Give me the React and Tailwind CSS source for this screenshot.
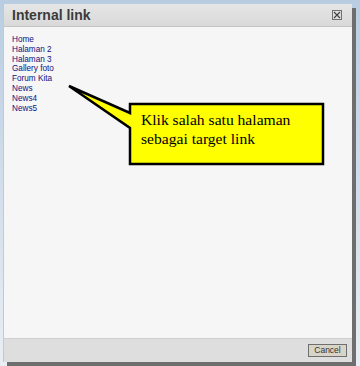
import React from "react";

const pages = ["Home", "Halaman 2", "Halaman 3", "Gallery foto", "Forum Kita", "News", "News4", "News5"];

const Callout = () => (
  <div className="absolute left-0 top-0 w-[360px] h-[366px] pointer-events-none">
    <svg className="absolute left-0 top-0" width="360" height="366" viewBox="0 0 360 366">
      <polygon
        points="69,86 130,113 130,104 323,104 323,164 130,164 130,128"
        fill="#ffff00"
        stroke="#000"
        strokeWidth="2.5"
        strokeLinejoin="miter"
      />
    </svg>
    <div
      className="absolute left-[141px] top-[110px] text-[15.6px] leading-[19px] text-black"
      style={{ fontFamily: '"Liberation Serif", "Times New Roman", serif' }}
    >
      <div>Klik salah satu halaman</div>
      <div>sebagai target link</div>
    </div>
  </div>
);

const App = () => {
  return (
    <div
      className="relative w-[360px] h-[366px] overflow-hidden bg-gradient-to-b from-[#b9cde2] to-[#e9eef4]"
      style={{ fontFamily: '"Liberation Sans", Arial, sans-serif' }}
    >
      {/* Dialog */}
      <div className="ml-[3px] pt-[4px]">
        <div className="w-[349px] h-[358px] flex flex-col bg-[#f6f6f6] border-l border-[#c8c8c8] shadow-[4px_4px_0_#6e6e6e]">
          {/* Title bar */}
          <div className="h-[23px] flex items-center justify-between pl-[8px] pr-[9px] bg-gradient-to-b from-[#e6e6e6] to-[#d9d9d9] border-b border-[#c4c4c4]">
            <span className="text-[14px] font-bold text-[#3b3b3b]">Internal link</span>
            <span className="w-[10px] h-[10px] border border-[#707070] flex items-center justify-center mr-[1px]">
              <svg width="8" height="8" viewBox="0 0 8 8">
                <path d="M1 1L7 7M7 1L1 7" stroke="#444" strokeWidth="1.2" />
              </svg>
            </span>
          </div>

          {/* Body */}
          <div className="flex-1 pl-[8px] pt-[8px]">
            <ul className="flex flex-col">
              {pages.map((p) => (
                <li key={p} className="text-[8.2px] leading-[9.8px] text-[#10107e]">
                  {p}
                </li>
              ))}
            </ul>
          </div>

          {/* Footer */}
          <div className="h-[24px] flex items-center justify-end pr-[5px] bg-[#dedede] border-t border-[#cfcfcf]">
            <button className="w-[39px] h-[13px] border border-[#6f6f6f] bg-[#d8d5c8] text-[8.5px] leading-none text-[#333]">
              Cancel
            </button>
          </div>
        </div>
      </div>

      <Callout />
    </div>
  );
};

export default App;
